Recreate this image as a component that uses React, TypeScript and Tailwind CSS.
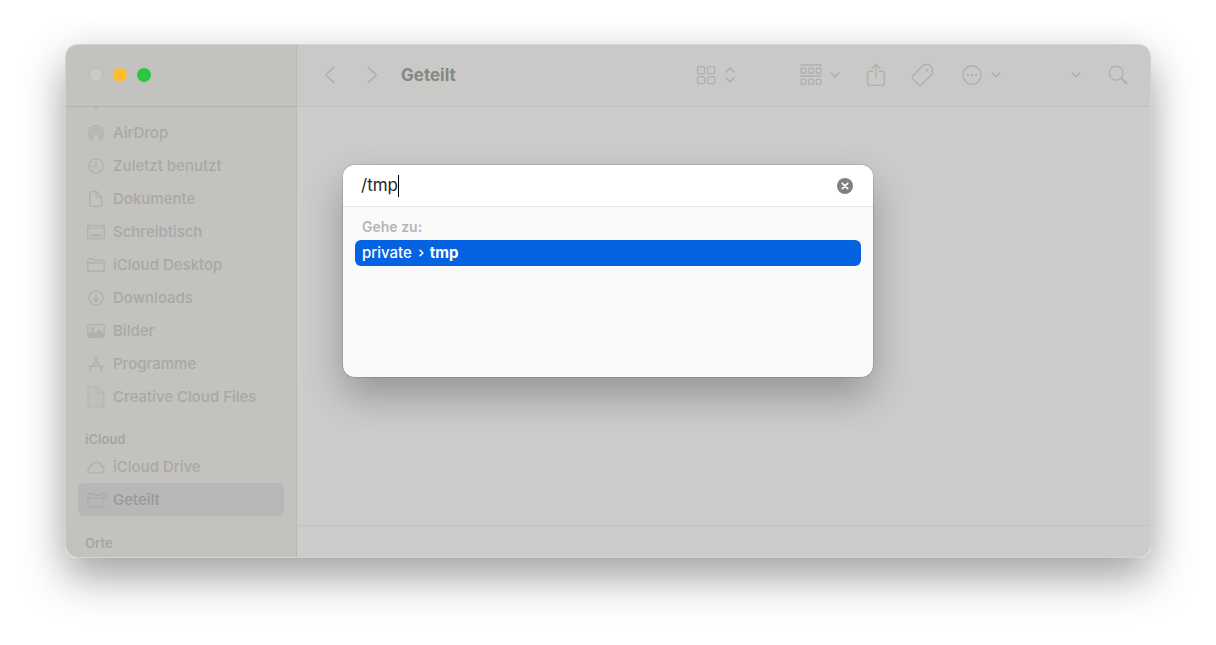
import { useState } from "react";
import type { ReactNode } from "react";

type IconProps = { children: ReactNode; className: string; box: string };

function Icon({ children, className, box }: IconProps) {
  return (
    <svg
      viewBox={box}
      className={`shrink-0 ${className}`}
      fill="none"
      stroke="currentColor"
      strokeWidth={1.4}
      strokeLinecap="round"
      strokeLinejoin="round"
      aria-hidden="true"
    >
      {children}
    </svg>
  );
}

const icons: Record<string, ReactNode> = {
  airdrop: (
    <>
      <path d="M5.2 15.9A7.6 7.6 0 1 1 12.8 15.9" />
      <path d="M6 13.6A5.2 5.2 0 1 1 12 13.6" />
      <path d="M7.1 11.4A2.8 2.8 0 1 1 10.9 11.4" />
      <circle cx="9" cy="9.4" r="0.8" fill="currentColor" />
    </>
  ),
  clock: (
    <>
      <circle cx="9" cy="9" r="7.1" />
      <path d="M9 4.8V9.4H5.4" />
    </>
  ),
  document: (
    <>
      <path d="M4.6 1.5H9.4L14.8 7V14.8A1.7 1.7 0 0 1 13.1 16.5H4.6A1.7 1.7 0 0 1 2.9 14.8V3.2A1.7 1.7 0 0 1 4.6 1.5Z" />
      <path d="M9.2 1.8V5.7A1.4 1.4 0 0 0 10.6 7.1H14.6" />
    </>
  ),
  desktop: (
    <>
      <rect x="0.8" y="2.6" width="16.4" height="13" rx="1.6" />
      <path d="M1 5.2H17" strokeWidth={1} />
      <path d="M4.4 12.2H13.6" strokeWidth={2.4} />
    </>
  ),
  folder: (
    <>
      <path d="M0.9 13.6V4.3A1.6 1.6 0 0 1 2.5 2.7H5.7L7.4 4.2H15.4A1.7 1.7 0 0 1 17.1 5.9V13.6A1.7 1.7 0 0 1 15.4 15.3H2.6A1.7 1.7 0 0 1 0.9 13.6Z" />
      <path d="M1 7H17" />
    </>
  ),
  download: (
    <>
      <circle cx="9" cy="9" r="7.1" />
      <path d="M9 5.2V12.4M6.2 9.8L9 12.5L11.8 9.8" />
    </>
  ),
  picture: (
    <>
      <rect x="0.8" y="2.6" width="16.4" height="12.8" rx="1.6" />
      <circle cx="5.5" cy="6.5" r="1.3" fill="currentColor" />
      <path
        d="M1.2 14.8V12.4L5.4 9.2L7.8 11L12 7.4L16.9 11.8V14.8Z"
        fill="currentColor"
        strokeWidth={0.8}
      />
    </>
  ),
  apps: (
    <>
      <path d="M7.4 2.6L14.9 15.2M10.6 2.6L5.2 11.4M3.5 14L2.8 15.3" strokeWidth={1.9} />
      <path d="M1.6 11.4H9.8M13 11.4H16.4" strokeWidth={1.9} />
    </>
  ),
  file: (
    <path
      d="M1.4 -1.4H10.4L16.8 5.2V18.8H1.4ZM10.2 -1.2C11.6 1.4 10.8 4.6 10.4 5.2C12.4 4.6 15 4.6 16.6 5.4"
      fill="currentColor"
      fillOpacity={0.15}
      strokeWidth={0.8}
    />
  ),
  cloud: (
    <path d="M4.6 14.9H13.8A3.4 3.4 0 0 0 14.5 8.2A5 5 0 0 0 5.2 6.8A3.1 3.1 0 0 0 3 9.3A2.9 2.9 0 0 0 4.6 14.9Z" />
  ),
  shared: (
    <>
      <path d="M11.6 4.3H7.4L5.7 2.8H2.5A1.6 1.6 0 0 0 .9 4.4V14A1.7 1.7 0 0 0 2.6 15.7H15A1.7 1.7 0 0 0 16.7 14V9.6M1 7.2H12" />
      <circle cx="17" cy="5" r="3.1" fill="currentColor" fillOpacity={0.4} strokeWidth={0.8} />
    </>
  ),
};

const favorites = [
  { label: "AirDrop", icon: "airdrop" },
  { label: "Zuletzt benutzt", icon: "clock" },
  { label: "Dokumente", icon: "document" },
  { label: "Schreibtisch", icon: "desktop" },
  { label: "iCloud Desktop", icon: "folder" },
  { label: "Downloads", icon: "download" },
  { label: "Bilder", icon: "picture" },
  { label: "Programme", icon: "apps" },
  { label: "Creative Cloud Files", icon: "file" },
];

const cloudItems = [
  { label: "iCloud Drive", icon: "cloud", active: false },
  { label: "Geteilt", icon: "shared", active: true },
];

function SidebarItem({
  label,
  icon,
  active,
}: {
  label: string;
  icon: string;
  active?: boolean;
}) {
  return (
    <li>
      <a
        href="#"
        className={`flex h-[33px] items-center gap-2 rounded-md pl-[9px] ${
          active ? "bg-[#b8b6b7] text-[#99989a]" : "text-[#a8a8a8]"
        }`}
      >
        <Icon
          box="0 0 18 18"
          className={`size-[18px] overflow-visible ${
            active ? "text-[#abaaac]" : "text-[#b1b0b2]"
          }`}
        >
          {icons[icon]}
        </Icon>
        <span className="text-[15px] leading-[23px] font-medium">{label}</span>
      </a>
    </li>
  );
}

function Sidebar() {
  return (
    <aside className="w-[231px] shrink-0 border-r border-[#b9b8b5] bg-[#c3c2be]">
      <div className="flex h-[62px] items-center gap-[10px] border-b border-[#b1b0ad] pb-px pl-[23px]">
        <button
          aria-label="Schließen"
          className="size-[14px] rounded-full border border-[#b9b8b6] bg-[#cbcac8]"
        />
        <button aria-label="Minimieren" className="size-[14px] rounded-full bg-[#fdbc2e]" />
        <button aria-label="Zoomen" className="size-[14px] rounded-full bg-[#28c840]" />
      </div>
      <nav className="px-3">
        {/* bottom edge of the row scrolled under the title bar */}
        <div className="flex h-[9px] items-start pl-4">
          <span className="h-px w-1 rounded-b bg-[#a9a9a9]" />
        </div>
        <ul>
          {favorites.map((item) => (
            <SidebarItem key={item.label} {...item} />
          ))}
        </ul>
        <h2 className="flex h-[37px] items-end pb-px pl-[7px] text-[13px] leading-5 font-semibold text-[#a5a5a5]">
          iCloud
        </h2>
        <ul>
          {cloudItems.map((item) => (
            <SidebarItem key={item.label} {...item} />
          ))}
        </ul>
        <h2 className="flex h-[41px] items-end pb-1 pl-[7px] text-[13px] leading-5 font-semibold text-[#a5a5a5]">
          Orte
        </h2>
      </nav>
    </aside>
  );
}

function ChevronDown() {
  return (
    <Icon box="0 0 10 8" className="h-2 w-[10px]">
      <path d="M1.2 2L5 5.8L8.8 2" strokeWidth={1.7} />
    </Icon>
  );
}

function Toolbar() {
  return (
    <header className="flex h-[62px] items-center justify-between border-b border-[#c0bfbb] bg-[#cac9c7] pr-[22px] pb-px pl-[27px] text-[#b0b0af]">
      <div className="flex items-center">
        <button aria-label="Zurück">
          <Icon box="0 0 12 18" className="h-[18px] w-3">
            <path d="M10 1.4L1.5 9L10 16.6" strokeWidth={1.6} />
          </Icon>
        </button>
        <button aria-label="Vorwärts" className="ml-[30px]">
          <Icon box="0 0 12 18" className="h-[18px] w-3">
            <path d="M2 1.4L10.5 9L2 16.6" strokeWidth={1.6} />
          </Icon>
        </button>
        <h1 className="ml-[23px] text-[17px] leading-6 font-bold text-[#878786]">Geteilt</h1>
      </div>
      <div className="flex items-center">
        <button aria-label="Darstellung" className="flex items-center gap-2">
          <Icon box="0 0 20 20" className="size-5">
            <rect x="1.6" y="1.6" width="7" height="7" rx="1.2" />
            <rect x="11.6" y="1.6" width="7" height="7" rx="1.2" />
            <rect x="1.6" y="11.6" width="7" height="7" rx="1.2" />
            <rect x="11.6" y="11.6" width="7" height="7" rx="1.2" />
          </Icon>
          <Icon box="0 0 12 16" className="h-4 w-3">
            <path d="M2.2 4.8L6 1.2L9.8 4.8M2.2 11.2L6 14.8L9.8 11.2" strokeWidth={1.7} />
          </Icon>
        </button>
        <button aria-label="Gruppieren" className="ml-16 flex items-center gap-2">
          <Icon box="0 0 22 22" className="size-[22px]">
            <path d="M.8 1H21.2M.8 12H21.2" strokeWidth={1.5} />
            <rect x="1" y="4.2" width="4.8" height="5" rx="1" />
            <rect x="8.6" y="4.2" width="4.8" height="5" rx="1" />
            <rect x="16.2" y="4.2" width="4.8" height="5" rx="1" />
            <rect x="1" y="15.4" width="4.8" height="5" rx="1" />
            <rect x="8.6" y="15.4" width="4.8" height="5" rx="1" />
            <rect x="16.2" y="15.4" width="4.8" height="5" rx="1" />
          </Icon>
          <ChevronDown />
        </button>
        <button aria-label="Teilen" className="ml-[26px]">
          <Icon box="0 0 20 24" className="h-6 w-5">
            <path d="M6.4 8.2H4A2.4 2.4 0 0 0 1.6 10.6V20A2.4 2.4 0 0 0 4 22.4H16A2.4 2.4 0 0 0 18.4 20V10.6A2.4 2.4 0 0 0 16 8.2H13.6" />
            <path d="M10 15V1.8M6.2 5.2L10 1.5L13.8 5.2" />
          </Icon>
        </button>
        <button aria-label="Tags" className="ml-6">
          <Icon box="0 0 24 24" className="size-6">
            <path d="M13.4 2.2L2.6 13.1A2 2 0 0 0 2.6 15.7L8.7 21.8A1.8 1.8 0 0 0 11.2 21.8L21.4 11.7A3 3 0 0 0 22.3 9.6V6.3A3.4 3.4 0 0 0 21.3 3.8L20 2.5A3.4 3.4 0 0 0 17.6 1.5H15.2A2.6 2.6 0 0 0 13.4 2.2Z" />
            <circle cx="16.8" cy="7.2" r="1" fill="currentColor" strokeWidth={0.8} />
          </Icon>
        </button>
        <button aria-label="Aktionen" className="ml-[27px] flex items-center gap-2">
          <Icon box="0 0 22 22" className="size-[22px]">
            <circle cx="11" cy="11" r="9.3" />
            <g fill="currentColor" stroke="none">
              <circle cx="6.7" cy="11" r="1.2" />
              <circle cx="11" cy="11" r="1.2" />
              <circle cx="15.3" cy="11" r="1.2" />
            </g>
          </Icon>
          <ChevronDown />
        </button>
        <button aria-label="Mehr" className="ml-[70px] flex">
          <ChevronDown />
        </button>
        <button aria-label="Suchen" className="ml-[27px]">
          <Icon box="0 0 20 20" className="size-5">
            <circle cx="8.2" cy="8.2" r="6.9" />
            <path d="M13.4 13.4L18.6 18.4" strokeWidth={2} />
          </Icon>
        </button>
      </div>
    </header>
  );
}

function GoToFolder() {
  const [path, setPath] = useState("/tmp");

  return (
    <div
      role="dialog"
      aria-label="Gehe zum Ordner"
      className="absolute top-[120px] left-1/2 w-[530px] -translate-x-1/2 overflow-hidden rounded-xl bg-[#fafafa] shadow-[0_0_0_1px_rgba(0,0,0,0.1),0_18px_40px_rgba(0,0,0,0.28)]"
    >
      <div className="flex h-[42px] items-center border-b border-[#e4e4e4] bg-white pr-5 pl-[18px]">
        <input
          type="text"
          aria-label="Pfad"
          value={path}
          onChange={(e) => setPath(e.target.value)}
          className="field-sizing-content text-[17px] leading-[25px] text-[#262626] caret-transparent outline-none"
        />
        <span className="h-[22px] w-px bg-black" />
        <button
          aria-label="Löschen"
          onClick={() => setPath("")}
          className="ml-auto text-[#808080]"
        >
          <Icon box="0 0 16 16" className="size-4">
            <circle cx="8" cy="8" r="8" fill="currentColor" stroke="none" />
            <path d="M5.3 5.3L10.7 10.7M10.7 5.3L5.3 10.7" stroke="#fff" strokeWidth={1.7} />
          </Icon>
        </button>
      </div>
      <div className="px-3 pt-[9px] pb-[111px]">
        <p className="pl-[7px] text-sm leading-[22px] font-semibold text-[#b5b5b5]">Gehe zu:</p>
        <button className="mt-[2px] flex h-[26px] w-full items-center gap-[7px] rounded-md bg-[#0563e1] pl-[7px] text-[15px] leading-6 font-medium text-white">
          private
          <Icon box="0 0 5 8" className="h-2 w-[5px]">
            <path d="M1 1.2L3.9 4L1 6.8" strokeWidth={1.5} />
          </Icon>
          <span className="-ml-px font-bold">tmp</span>
        </button>
      </div>
    </div>
  );
}

export default function App() {
  return (
    <div className="min-h-screen bg-white px-[65px] pt-11 pb-20 font-['Inter',sans-serif]">
      <div className="relative rounded-xl border border-[#d3d3d2] shadow-[0_20px_44px_rgba(0,0,0,0.34),0_4px_40px_rgba(0,0,0,0.06)]">
        <div className="flex overflow-hidden rounded-[11px]">
          <Sidebar />
          <main className="flex min-w-0 flex-1 flex-col bg-[#cccccc]">
            <Toolbar />
            <div className="flex-1" />
            <footer className="h-8 border-t border-[#c2c2c2]" />
          </main>
        </div>
        <GoToFolder />
      </div>
    </div>
  );
}
